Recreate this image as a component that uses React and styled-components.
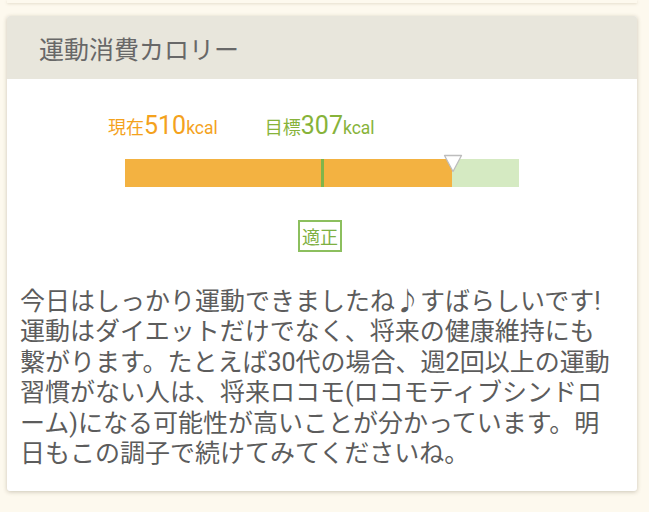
import React from 'react';
import styled, { createGlobalStyle } from 'styled-components';

const GlobalStyle = createGlobalStyle`
    html, body {
        margin: 0;
        padding: 0;
        background: #fdf9ee;
    }
    body {
        font-family: Roboto, "Noto Sans CJK JP", sans-serif;
    }
`;

const Page = styled.div`
    width: 649px;
    height: 512px;
    overflow: hidden;
`;

const PrevCard = styled.div`
    height: 3px;
    margin: 0 12px 13px 7px;
    background: #fdf9ee;
    box-shadow: 0 1px 3px rgba(120, 100, 60, 0.18);
`;

const Card = styled.section`
    margin: 0 12px 0 7px;
    background: #fff;
    border-radius: 3px;
    overflow: hidden;
    box-shadow: 0 1px 4px rgba(90, 80, 50, 0.3);
`;

const CardHeader = styled.header`
    height: 63px;
    display: flex;
    align-items: center;
    padding-left: 32px;
    background: #e8e6dc;
    color: #686868;
    font-size: 25px;
    font-family: "Noto Sans CJK JP", sans-serif;
`;

const CardBody = styled.div`
    padding: 32px 0 22px;
`;

const Labels = styled.div`
    display: flex;
    gap: 47px;
    padding-left: 101px;
    align-items: baseline;
    height: 34px;
`;

const Label = styled.div`
    color: ${(p) => p.color};
    display: flex;
    align-items: baseline;
`;

const LabelName = styled.span`
    font-family: "Noto Sans CJK JP", sans-serif;
    font-size: 18px;
`;

const LabelNum = styled.span`
    font-family: Roboto, sans-serif;
    font-size: 25px;
`;

const LabelUnit = styled.span`
    font-family: Roboto, sans-serif;
    font-size: 17.5px;
`;

const BarWrap = styled.div`
    position: relative;
    width: 394px;
    height: 28px;
    margin: 14px 0 0 118px;
    background: #d5eac2;
`;

const BarFill = styled.div`
    height: 100%;
    background: #f3b241;
`;

const TargetTick = styled.div`
    position: absolute;
    top: 0;
    bottom: 0;
    width: 3px;
    background: #7fb54a;
`;

const Marker = styled.svg`
    position: absolute;
    top: -5px;
    width: 20px;
    height: 20px;
    margin-left: -9px;
`;

const BadgeRow = styled.div`
    display: flex;
    justify-content: center;
    margin-top: 33px;
`;

const Badge = styled.div`
    border: 2px solid #8cbf5e;
    color: #7eb041;
    font-family: "Noto Sans CJK JP", sans-serif;
    font-size: 18px;
    line-height: 28px;
    padding: 0 2px;
    margin-left: -4px;
`;

const Message = styled.p`
    margin: 35px 0 0;
    padding: 0 19px 0 13px;
    color: #5c5c5c;
    font-size: 25px;
    line-height: 30.4px;
    font-family: Roboto, "Noto Sans CJK JP", sans-serif;
`;

function App() {
    const fill = (327 / 394) * 100;
    const target = (196 / 394) * 100;
    return (
        <Page>
            <GlobalStyle />
            <PrevCard />
            <Card>
                <CardHeader>運動消費カロリー</CardHeader>
                <CardBody>
                    <Labels>
                        <Label color="#f4a21d">
                            <LabelName>現在</LabelName>
                            <LabelNum>510</LabelNum>
                            <LabelUnit>kcal</LabelUnit>
                        </Label>
                        <Label color="#87b33a">
                            <LabelName>目標</LabelName>
                            <LabelNum>307</LabelNum>
                            <LabelUnit>kcal</LabelUnit>
                        </Label>
                    </Labels>
                    <BarWrap>
                        <BarFill style={{ width: `${fill}%` }} />
                        <TargetTick style={{ left: `${target}%` }} />
                        <Marker viewBox="0 0 20 20" style={{ left: `${fill}%` }}>
                            <path d="M1.5 1.5 L18.5 1.5 L10 17.5 Z" fill="#fff" stroke="#bdbdbd" strokeWidth="1.3" strokeLinejoin="round" />
                        </Marker>
                    </BarWrap>
                    <BadgeRow>
                        <Badge>適正</Badge>
                    </BadgeRow>
                    <Message>
                        今日はしっかり運動できましたね♪すばらしいです!運動はダイエットだけでなく、将来の健康維持にも繫がります。たとえば30代の場合、週2回以上の運動習慣がない人は、将来ロコモ(ロコモティブシンドローム)になる可能性が高いことが分かっています。明日もこの調子で続けてみてくださいね。
                    </Message>
                </CardBody>
            </Card>
        </Page>
    );
}

export default App;
